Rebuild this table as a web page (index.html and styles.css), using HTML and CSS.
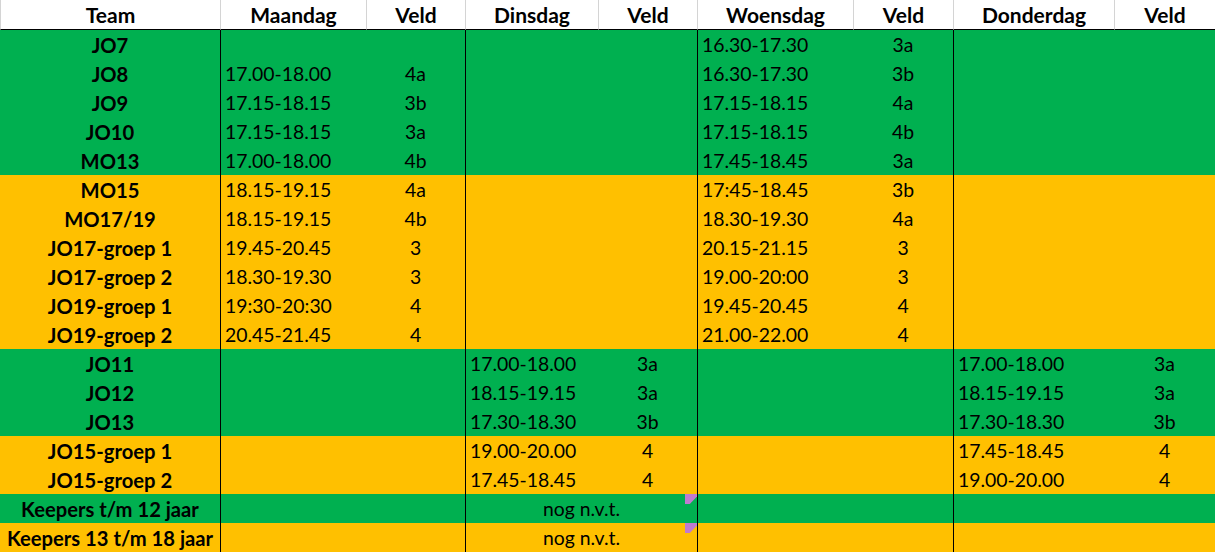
FILE: index.html
```html
<!DOCTYPE html>
<html lang="nl">
<head>
<meta charset="utf-8">
<title>Trainingsschema</title>
<link rel="stylesheet" href="styles.css">
</head>
<body>
<div class="sheet">
  <div class="row head">
    <div class="c first">Team</div>
    <div class="c">Maandag</div>
    <div class="c">Veld</div>
    <div class="c">Dinsdag</div>
    <div class="c">Veld</div>
    <div class="c">Woensdag</div>
    <div class="c">Veld</div>
    <div class="c">Donderdag</div>
    <div class="c">Veld</div>
  </div>

  <div class="row green">
    <div class="c team">JO7</div>
    <div class="c t day"></div><div class="c v"></div>
    <div class="c t day"></div><div class="c v"></div>
    <div class="c t day">16.30-17.30</div><div class="c v">3a</div>
    <div class="c t day"></div><div class="c v"></div>
  </div>
  <div class="row green">
    <div class="c team">JO8</div>
    <div class="c t day">17.00-18.00</div><div class="c v">4a</div>
    <div class="c t day"></div><div class="c v"></div>
    <div class="c t day">16.30-17.30</div><div class="c v">3b</div>
    <div class="c t day"></div><div class="c v"></div>
  </div>
  <div class="row green">
    <div class="c team">JO9</div>
    <div class="c t day">17.15-18.15</div><div class="c v">3b</div>
    <div class="c t day"></div><div class="c v"></div>
    <div class="c t day">17.15-18.15</div><div class="c v">4a</div>
    <div class="c t day"></div><div class="c v"></div>
  </div>
  <div class="row green">
    <div class="c team">JO10</div>
    <div class="c t day">17.15-18.15</div><div class="c v">3a</div>
    <div class="c t day"></div><div class="c v"></div>
    <div class="c t day">17.15-18.15</div><div class="c v">4b</div>
    <div class="c t day"></div><div class="c v"></div>
  </div>
  <div class="row green">
    <div class="c team">MO13</div>
    <div class="c t day">17.00-18.00</div><div class="c v">4b</div>
    <div class="c t day"></div><div class="c v"></div>
    <div class="c t day">17.45-18.45</div><div class="c v">3a</div>
    <div class="c t day"></div><div class="c v"></div>
  </div>

  <div class="row yellow">
    <div class="c team">MO15</div>
    <div class="c t day">18.15-19.15</div><div class="c v">4a</div>
    <div class="c t day"></div><div class="c v"></div>
    <div class="c t day">17:45-18.45</div><div class="c v">3b</div>
    <div class="c t day"></div><div class="c v"></div>
  </div>
  <div class="row yellow">
    <div class="c team">MO17/19</div>
    <div class="c t day">18.15-19.15</div><div class="c v">4b</div>
    <div class="c t day"></div><div class="c v"></div>
    <div class="c t day">18.30-19.30</div><div class="c v">4a</div>
    <div class="c t day"></div><div class="c v"></div>
  </div>
  <div class="row yellow">
    <div class="c team">JO17-groep 1</div>
    <div class="c t day">19.45-20.45</div><div class="c v">3</div>
    <div class="c t day"></div><div class="c v"></div>
    <div class="c t day">20.15-21.15</div><div class="c v">3</div>
    <div class="c t day"></div><div class="c v"></div>
  </div>
  <div class="row yellow">
    <div class="c team">JO17-groep 2</div>
    <div class="c t day">18.30-19.30</div><div class="c v">3</div>
    <div class="c t day"></div><div class="c v"></div>
    <div class="c t day">19.00-20:00</div><div class="c v">3</div>
    <div class="c t day"></div><div class="c v"></div>
  </div>
  <div class="row yellow">
    <div class="c team">JO19-groep 1</div>
    <div class="c t day">19:30-20:30</div><div class="c v">4</div>
    <div class="c t day"></div><div class="c v"></div>
    <div class="c t day">19.45-20.45</div><div class="c v">4</div>
    <div class="c t day"></div><div class="c v"></div>
  </div>
  <div class="row yellow">
    <div class="c team">JO19-groep 2</div>
    <div class="c t day">20.45-21.45</div><div class="c v">4</div>
    <div class="c t day"></div><div class="c v"></div>
    <div class="c t day">21.00-22.00</div><div class="c v">4</div>
    <div class="c t day"></div><div class="c v"></div>
  </div>

  <div class="row green">
    <div class="c team">JO11</div>
    <div class="c t day"></div><div class="c v"></div>
    <div class="c t day">17.00-18.00</div><div class="c v">3a</div>
    <div class="c t day"></div><div class="c v"></div>
    <div class="c t day">17.00-18.00</div><div class="c v">3a</div>
  </div>
  <div class="row green">
    <div class="c team">JO12</div>
    <div class="c t day"></div><div class="c v"></div>
    <div class="c t day">18.15-19.15</div><div class="c v">3a</div>
    <div class="c t day"></div><div class="c v"></div>
    <div class="c t day">18.15-19.15</div><div class="c v">3a</div>
  </div>
  <div class="row green">
    <div class="c team">JO13</div>
    <div class="c t day"></div><div class="c v"></div>
    <div class="c t day">17.30-18.30</div><div class="c v">3b</div>
    <div class="c t day"></div><div class="c v"></div>
    <div class="c t day">17.30-18.30</div><div class="c v">3b</div>
  </div>

  <div class="row yellow">
    <div class="c team">JO15-groep 1</div>
    <div class="c t day"></div><div class="c v"></div>
    <div class="c t day">19.00-20.00</div><div class="c v">4</div>
    <div class="c t day"></div><div class="c v"></div>
    <div class="c t day">17.45-18.45</div><div class="c v">4</div>
  </div>
  <div class="row yellow">
    <div class="c team">JO15-groep 2</div>
    <div class="c t day"></div><div class="c v"></div>
    <div class="c t day">17.45-18.45</div><div class="c v">4</div>
    <div class="c t day"></div><div class="c v"></div>
    <div class="c t day">19.00-20.00</div><div class="c v">4</div>
  </div>

  <div class="row green">
    <div class="c team">Keepers t/m 12 jaar</div>
    <div class="c t day"></div><div class="c v"></div>
    <div class="c merged day">nog n.v.t.<span class="note"></span></div>
    <div class="c t day"></div><div class="c v"></div>
    <div class="c t day"></div><div class="c v"></div>
  </div>
  <div class="row yellow">
    <div class="c team">Keepers 13 t/m 18 jaar</div>
    <div class="c t day"></div><div class="c v"></div>
    <div class="c merged day">nog n.v.t.<span class="note"></span></div>
    <div class="c t day"></div><div class="c v"></div>
    <div class="c t day"></div><div class="c v"></div>
  </div>
</div>
</body>
</html>
```

FILE: styles.css
```css
html, body {
  margin: 0;
  padding: 0;
  background: #ffffff;
}

.sheet {
  width: 1215px;
  font-family: Lato, "Open Sans", "DejaVu Sans", sans-serif;
  font-size: 19.4px;
  color: #000000;
}

.row {
  display: grid;
  grid-template-columns: 220px 146px 99px 133px 99px 156px 100px 161px 101px;
  height: 29px;
}

.green { background: #00b050; }
.yellow { background: #ffc000; }

.c {
  box-sizing: border-box;
  display: flex;
  align-items: flex-end;
  padding-bottom: 3px;
  white-space: nowrap;
  overflow: hidden;
  position: relative;
}

.head {
  height: 30px;
  background: #ffffff;
  font-weight: 700;
  font-size: 21px;
}

.head .c {
  justify-content: center;
  border-left: 1px solid #d4d4d4;
  border-bottom: 1px solid #000000;
  padding-bottom: 2px;
}

.team {
  justify-content: center;
  font-weight: 700;
  font-size: 20.2px;
  padding-bottom: 2px;
}

.t {
  padding-left: 4px;
}

.v {
  justify-content: center;
}

.day {
  border-left: 1px solid #000000;
}

.merged {
  grid-column: span 2;
  justify-content: center;
}

.note {
  position: absolute;
  top: 0;
  right: 0;
  width: 12px;
  height: 10px;
  background: #c07ad0;
  clip-path: polygon(0 0, 100% 0, 100% 25%, 40% 100%, 0 100%);
}
```
